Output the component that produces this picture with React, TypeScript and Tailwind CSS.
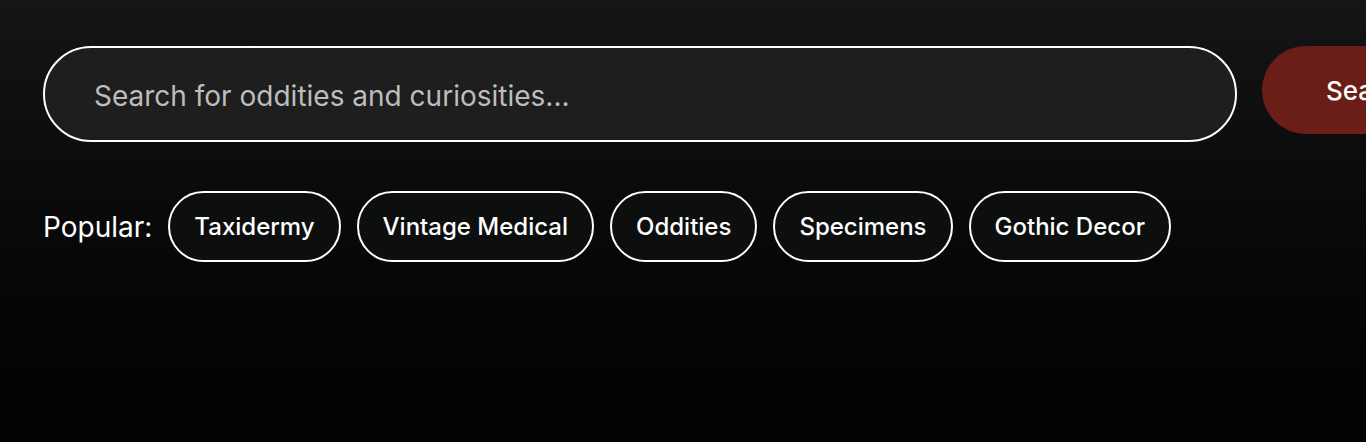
import React from 'react'

const POPULAR = ['Taxidermy', 'Vintage Medical', 'Oddities', 'Specimens', 'Gothic Decor']

export default function App() {
  return (
    <div
      className="h-[442px] w-full overflow-hidden bg-gradient-to-b from-[#151517] to-[#020202] pt-[46px] pl-[43px]"
      style={{ fontFamily: 'Inter, "Noto Sans", sans-serif' }}
    >
      {/* Search bar */}
      <div className="flex items-start gap-[25px] w-[1500px]">
        <div className="w-[1194px] h-[96px] shrink-0 rounded-full border-2 border-white bg-[#1e1e1e] flex items-center pl-[49px]">
          <input
            type="text"
            placeholder="Search for oddities and curiosities..."
            className="w-full bg-transparent outline-none text-[28px] text-white placeholder:text-[#bdbdbd] mt-[3px]"
          />
        </div>
        <button
          type="button"
          className="h-[88px] shrink-0 rounded-full bg-[#6b1d18] px-[64px] text-[26px] font-medium text-white"
        >
          Search
        </button>
      </div>

      {/* Popular tags */}
      <div className="mt-[49px] flex items-center gap-4">
        <span className="text-[28px] text-white">Popular:</span>
        {POPULAR.map((tag) => (
          <button
            key={tag}
            type="button"
            className="h-[71px] rounded-full border-2 border-white bg-[#0d0f0f] px-[24px] text-[24px] font-medium text-white"
          >
            {tag}
          </button>
        ))}
      </div>
    </div>
  )
}
